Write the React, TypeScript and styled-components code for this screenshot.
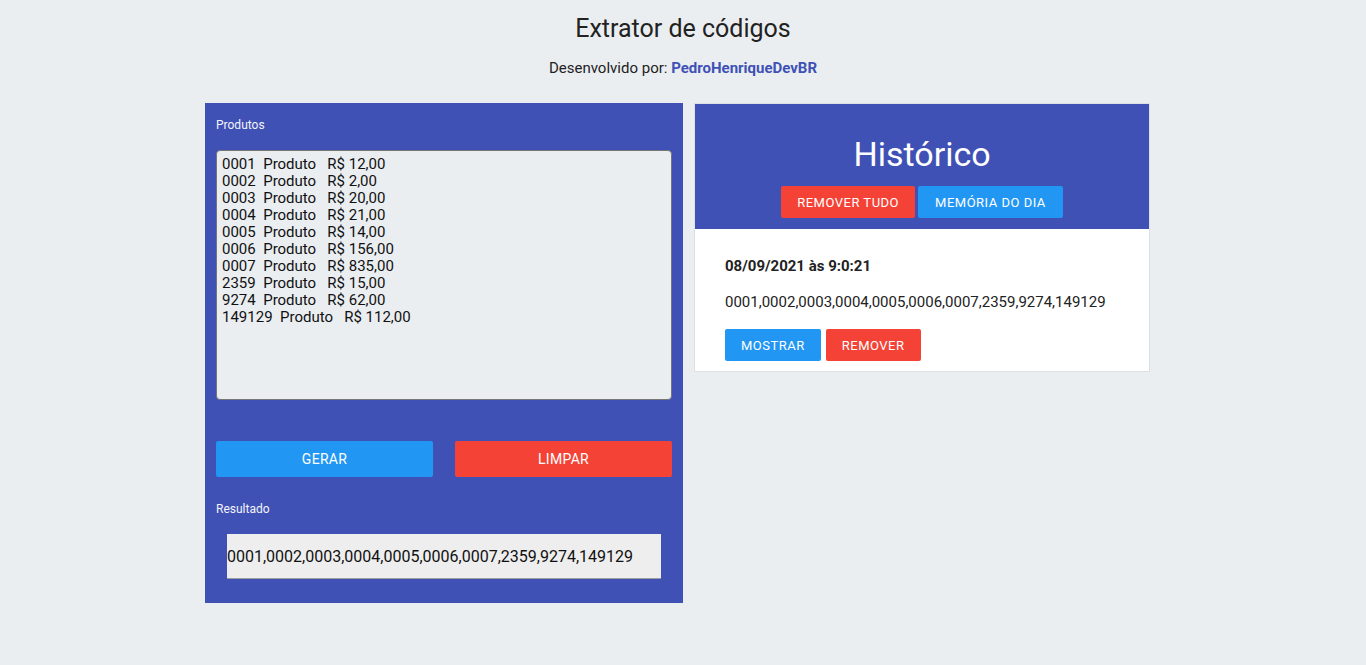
import React from 'react';
import styled, {createGlobalStyle} from 'styled-components';

const GlobalStyle = createGlobalStyle`
  body {
    margin: 0;
    background: #eaeef1;
    font-family: Roboto, "Liberation Sans", sans-serif;
    color: #222;
  }
`;

const produtos = `0001  Produto   R$ 12,00
0002  Produto   R$ 2,00
0003  Produto   R$ 20,00
0004  Produto   R$ 21,00
0005  Produto   R$ 14,00
0006  Produto   R$ 156,00
0007  Produto   R$ 835,00
2359  Produto   R$ 15,00
9274  Produto   R$ 62,00
149129  Produto   R$ 112,00`;

const codigos = '0001,0002,0003,0004,0005,0006,0007,2359,9274,149129';

function App() {
  return (
    <Page>
      <GlobalStyle />
      <Header>
        <Title>Extrator de códigos</Title>
        <Credit>
          Desenvolvido por: <Author href="#">PedroHenriqueDevBR</Author>
        </Credit>
      </Header>
      <Main>
        <Extractor>
          <Label>Produtos</Label>
          <ProductsArea defaultValue={produtos} />
          <Actions>
            <WideButton $color="#2196f3">Gerar</WideButton>
            <WideButton $color="#f44336">Limpar</WideButton>
          </Actions>
          <Label>Resultado</Label>
          <ResultBox>{codigos}</ResultBox>
        </Extractor>
        <History>
          <HistoryHead>
            <HistoryTitle>Histórico</HistoryTitle>
            <HeadActions>
              <SmallButton $color="#f44336">Remover tudo</SmallButton>
              <SmallButton $color="#2196f3" $wide>
                Memória do dia
              </SmallButton>
            </HeadActions>
          </HistoryHead>
          <Entry>
            <EntryDate>08/09/2021 às 9:0:21</EntryDate>
            <EntryCodes>{codigos}</EntryCodes>
            <EntryActions>
              <SmallButton $color="#2196f3">Mostrar</SmallButton>
              <SmallButton $color="#f44336">Remover</SmallButton>
            </EntryActions>
          </Entry>
        </History>
      </Main>
    </Page>
  );
}

export default App;

const Page = styled.div`
  display: flex;
  flex-direction: column;
  align-items: center;
  min-height: 665px;
`;

const Header = styled.header`
  display: flex;
  flex-direction: column;
  align-items: center;
  padding-top: 14px;
`;

const Title = styled.h1`
  margin: 0;
  font-size: 25px;
  font-weight: 400;
  line-height: 30px;
  color: #222;
`;

const Credit = styled.p`
  margin: 15px 0 0;
  font-size: 15px;
  line-height: 18px;
  color: #222;
`;

const Author = styled.a`
  color: #3f51b5;
  font-weight: 700;
  text-decoration: none;
`;

const Main = styled.main`
  display: flex;
  align-items: flex-start;
  gap: 11px;
  width: 956px;
  margin-top: 26px;
`;

const Extractor = styled.section`
  display: flex;
  flex-direction: column;
  width: 478px;
  box-sizing: border-box;
  padding: 15px 11px 24px;
  background: #3f51b5;
`;

const Label = styled.label`
  font-size: 12px;
  line-height: 14px;
  color: #f4f4f8;
`;

const ProductsArea = styled.textarea`
  margin-top: 18px;
  height: 250px;
  box-sizing: border-box;
  padding: 5px 5px;
  border: 1px solid #767676;
  border-radius: 4px;
  background: #eaeef1;
  font-family: Roboto, "Liberation Sans", sans-serif;
  font-size: 15px;
  line-height: 17px;
  color: #111;
  resize: none;
  outline: none;
  white-space: pre;
`;

const Actions = styled.div`
  display: flex;
  justify-content: space-between;
  margin: 41px 0 25px;
`;

const WideButton = styled.button<{$color: string}>`
  width: 217px;
  height: 36px;
  border: none;
  border-radius: 2px;
  background: ${(p) => p.$color};
  color: #fff;
  font-family: Roboto, "Liberation Sans", sans-serif;
  font-size: 14px;
  text-transform: uppercase;
  letter-spacing: 0.3px;
`;

const ResultBox = styled.div`
  align-self: center;
  width: 434px;
  height: 45px;
  box-sizing: border-box;
  margin-top: 18px;
  display: flex;
  align-items: center;
  background: #eeeeee;
  border-bottom: 1px solid #9e9e9e;
  font-size: 16px;
  color: #111;
`;

const History = styled.section`
  width: 456px;
  background: #fff;
  border: 1px solid #dcdfe3;
  box-sizing: border-box;
`;

const HistoryHead = styled.div`
  display: flex;
  flex-direction: column;
  align-items: center;
  padding: 29px 0 11px;
  background: #3f51b5;
`;

const HistoryTitle = styled.h2`
  margin: 0;
  font-size: 34px;
  font-weight: 400;
  line-height: 42px;
  color: #fff;
`;

const HeadActions = styled.div`
  display: flex;
  gap: 3px;
  margin-top: 11px;
`;

const SmallButton = styled.button<{$color: string; $wide?: boolean}>`
  height: 32px;
  padding: 0 ${(p) => (p.$wide ? 17 : 16)}px;
  border: none;
  border-radius: 2px;
  background: ${(p) => p.$color};
  color: #fff;
  font-family: Roboto, "Liberation Sans", sans-serif;
  font-size: 13px;
  text-transform: uppercase;
  letter-spacing: 0.5px;
`;

const Entry = styled.div`
  padding: 28px 30px 10px;
`;

const EntryDate = styled.div`
  font-size: 15px;
  font-weight: 700;
  line-height: 18px;
  color: #222;
`;

const EntryCodes = styled.div`
  margin-top: 18px;
  font-size: 15px;
  line-height: 18px;
  color: #222;
`;

const EntryActions = styled.div`
  display: flex;
  gap: 5px;
  margin-top: 18px;
`;
